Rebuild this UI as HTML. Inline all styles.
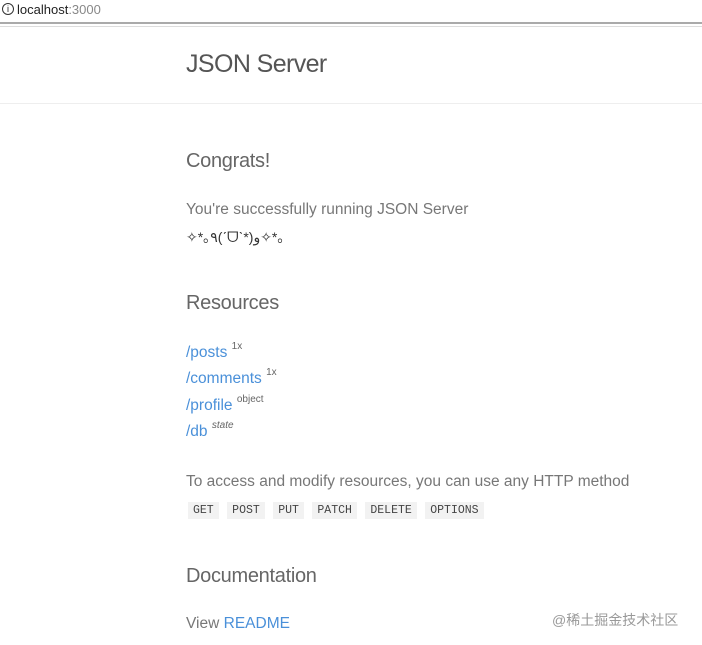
<!DOCTYPE html>
<html><head><meta charset="utf-8"><style>
body{margin:0;width:702px;height:645px;overflow:hidden;background:#fff;font-family:"Liberation Sans","DejaVu Sans","Noto Sans CJK SC",sans-serif;color:#777;position:relative}
.bar{position:absolute;left:0;top:0;width:702px;height:22px;font-size:13px;color:#222}
.bar span{color:#888}
.l1{position:absolute;top:22px;left:0;width:702px;height:0;border-top:2px solid #aaa}
.l2{position:absolute;top:26px;left:0;width:702px;border-top:1px solid #ddd}
.hdr{position:absolute;top:103px;left:0;width:702px;border-top:1px solid #eee}
.t{position:absolute;left:186px;white-space:nowrap}
a{color:#4a90d9;text-decoration:none}
sup{font-size:10px;color:#666;vertical-align:0;position:relative;top:-8px;line-height:0}
code{font-family:"Liberation Mono",monospace;font-size:11.5px;background:#f2f2f2;color:#444;padding:2px 5px;margin-right:4px}
</style></head><body>
<div class="bar"><div style="position:absolute;left:2px;top:3px;width:10px;height:10px;border:1px solid #333;border-radius:50%;font-size:9px;line-height:10px;text-align:center">i</div><div style="position:absolute;left:17px;top:2px">localhost<span>:3000</span></div></div>
<div class="l1"></div><div class="l2"></div>
<div class="t" style="top:50px;font-size:25px;color:#555;letter-spacing:-0.6px">JSON Server</div>
<div class="hdr"></div>
<div class="t" style="top:150px;font-size:20px;color:#666;letter-spacing:-0.3px">Congrats!</div>
<div class="t" style="top:201px;font-size:15.5px">You're successfully running JSON Server</div>
<div class="t" style="top:227px;font-size:14px;color:#333">✧*｡٩(ˊᗜˋ*)و✧*｡</div>
<div class="t" style="top:292px;font-size:20px;color:#666;letter-spacing:-0.3px">Resources</div>
<div class="t" style="top:344px;font-size:15.5px"><a>/posts</a> <sup>1x</sup></div>
<div class="t" style="top:370px;font-size:15.5px"><a>/comments</a> <sup>1x</sup></div>
<div class="t" style="top:397px;font-size:15.5px"><a>/profile</a> <sup>object</sup></div>
<div class="t" style="top:423px;font-size:15.5px"><a>/db</a> <sup><i>state</i></sup></div>
<div class="t" style="top:473px;font-size:15.5px">To access and modify resources, you can use any HTTP method</div>
<div class="t" style="top:500px;left:188px"><code>GET</code> <code>POST</code> <code>PUT</code> <code>PATCH</code> <code>DELETE</code> <code>OPTIONS</code></div>
<div class="t" style="top:565px;font-size:20px;color:#666;letter-spacing:-0.3px">Documentation</div>
<div class="t" style="top:615px;font-size:15.5px">View <a>README</a></div>
<div style="position:absolute;left:552px;top:610px;font-size:14px;color:#999">@稀土掘金技术社区</div>
</body></html>
